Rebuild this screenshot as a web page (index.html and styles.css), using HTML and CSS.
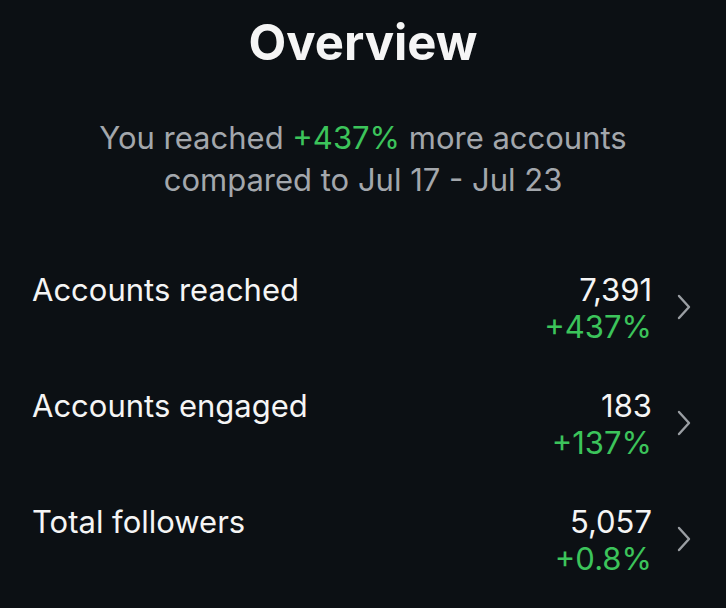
FILE: index.html
```html
<!DOCTYPE html>
<html>
<head>
<meta charset="utf-8">
<link rel="stylesheet" href="styles.css">
</head>
<body>
<main class="overview">
  <h1 class="title">Overview</h1>
  <p class="summary">You reached <span class="up">+437%</span> more accounts<br>compared to Jul 17 - Jul 23</p>
  <ul class="stats">
    <li class="row">
      <span class="label">Accounts reached</span>
      <span class="values"><span class="num">7,391</span><span class="delta">+437%</span></span>
      <svg class="chev" viewBox="0 0 14 26" width="14" height="26"><path d="M2 2 L12 13 L2 24" fill="none" stroke="#9a9ea3" stroke-width="2.4" stroke-linecap="round" stroke-linejoin="round"/></svg>
    </li>
    <li class="row">
      <span class="label">Accounts engaged</span>
      <span class="values"><span class="num">183</span><span class="delta">+137%</span></span>
      <svg class="chev" viewBox="0 0 14 26" width="14" height="26"><path d="M2 2 L12 13 L2 24" fill="none" stroke="#9a9ea3" stroke-width="2.4" stroke-linecap="round" stroke-linejoin="round"/></svg>
    </li>
    <li class="row">
      <span class="label">Total followers</span>
      <span class="values"><span class="num">5,057</span><span class="delta">+0.8%</span></span>
      <svg class="chev" viewBox="0 0 14 26" width="14" height="26"><path d="M2 2 L12 13 L2 24" fill="none" stroke="#9a9ea3" stroke-width="2.4" stroke-linecap="round" stroke-linejoin="round"/></svg>
    </li>
  </ul>
</main>
</body>
</html>
```
FILE: styles.css
```css
html, body {
  margin: 0;
  padding: 0;
  background: #0c1014;
}
body {
  width: 726px;
  height: 608px;
  overflow: hidden;
  font-family: Inter, "Noto Sans", sans-serif;
  color: #f5f5f5;
}
.overview {
  display: flex;
  flex-direction: column;
}
.title {
  margin: 13px 0 0;
  text-align: center;
  font-size: 49px;
  font-weight: 700;
  line-height: 60px;
}
.summary {
  margin: 44px 0 0;
  text-align: center;
  font-size: 31px;
  line-height: 42px;
  color: #a3a7ac;
}
.up {
  color: #3cc45b;
}
.stats {
  list-style: none;
  margin: 70px 0 0;
  padding: 0 35px 0 32px;
  display: flex;
  flex-direction: column;
  gap: 38px;
}
.row {
  display: flex;
  align-items: flex-start;
  height: 78px;
}
.label {
  flex: 1;
  font-size: 31px;
  line-height: 38px;
}
.values {
  display: flex;
  flex-direction: column;
  align-items: flex-end;
}
.num {
  font-size: 31px;
  line-height: 38px;
}
.delta {
  font-size: 31px;
  line-height: 35px;
  color: #3cc45b;
}
.chev {
  margin: 23px 0 0 25px;
}
```
